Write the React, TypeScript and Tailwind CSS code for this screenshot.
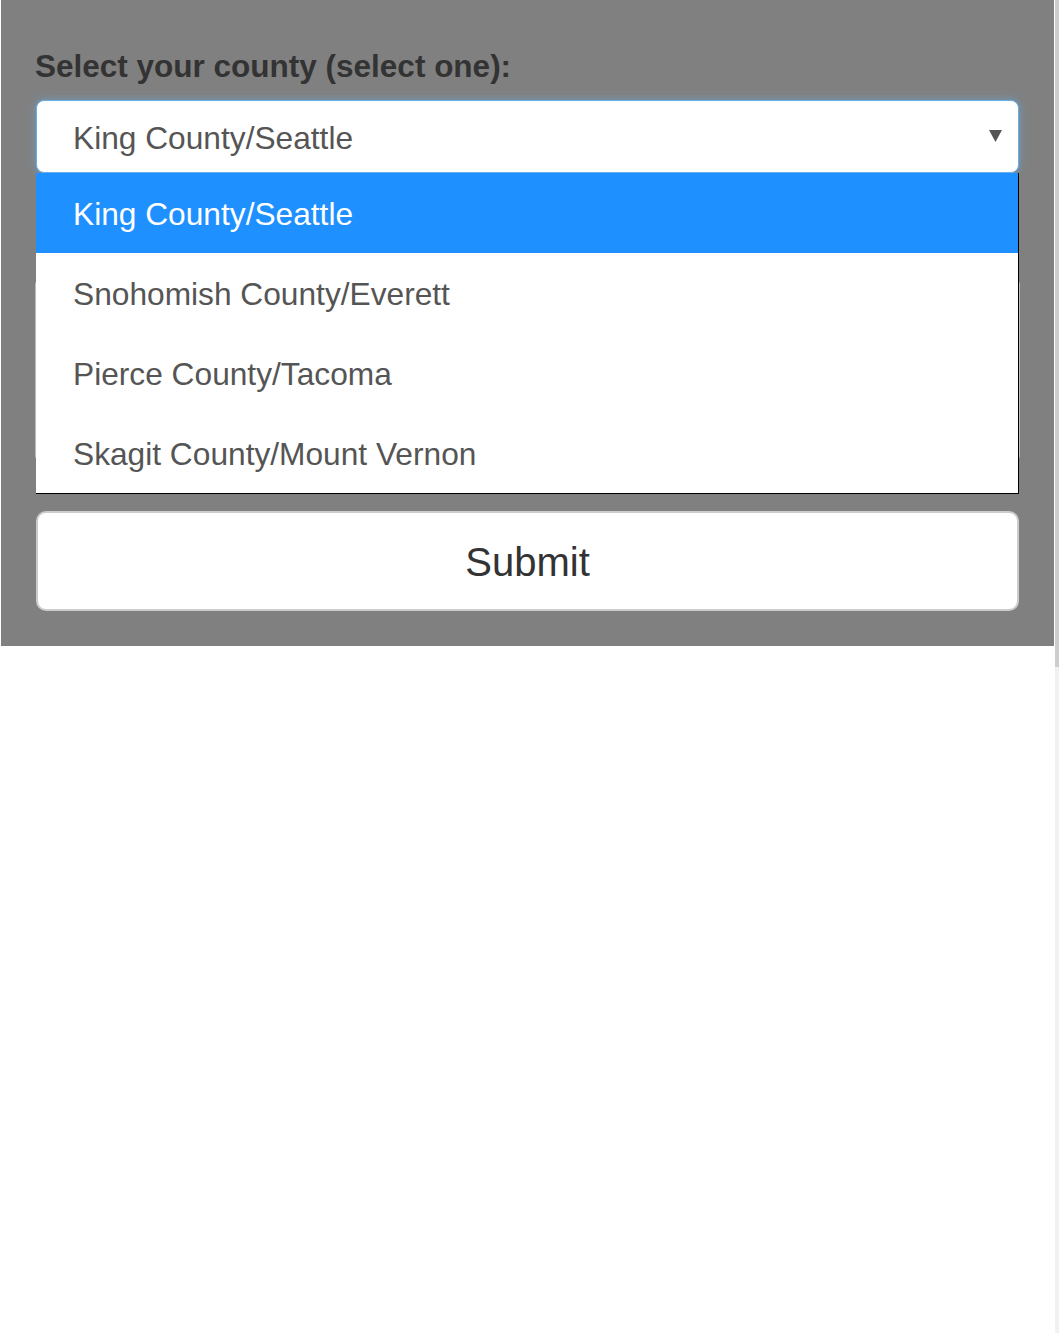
import React from "react";

const options = [
  "King County/Seattle",
  "Snohomish County/Everett",
  "Pierce County/Tacoma",
  "Skagit County/Mount Vernon",
];

export default function App() {
  return (
    <div
      className="flex w-[1059px] h-[1333px] bg-white"
      style={{ fontFamily: '"Liberation Sans", Arial, sans-serif' }}
    >
      <div className="w-px shrink-0 bg-white" />
      <div className="w-[1053px] shrink-0 self-start bg-[#808080] px-[35px] pt-[48px] pb-[35px]">
        <div className="text-[31.5px] leading-[36px] font-bold text-[#333] -ml-px">
          Select your county (select one):
        </div>
        <div className="relative mt-[16px]">
          <div className="flex h-[73px] items-center justify-between rounded-[8px] border border-[#66afe9] bg-white pl-[36px] pr-[16px] shadow-[0_0_8px_rgba(102,175,233,0.6)]">
            <span className="pt-[4px] text-[31.7px] text-[#555]">King County/Seattle</span>
            <svg width="13" height="12" viewBox="0 0 13 12" className="mt-[-1px]">
              <polygon points="0,0 13,0 6.5,12" fill="#555" />
            </svg>
          </div>
          <div className="h-[338px] pt-[107px]">
            <div className="-ml-px h-[180px] w-[985px] rounded-[4px] border border-[#bbb]" />
          </div>
          <div className="absolute left-0 top-[73px] z-10 w-[983px] border-b border-r border-black bg-white">
            {options.map((o, i) => (
              <div
                key={o}
                className={
                  i === 0
                    ? "flex h-[80px] items-center bg-[#1e90ff] pl-[37px] pt-[4px] text-[31.7px] text-white"
                    : "flex h-[80px] items-center bg-white pl-[37px] pt-[4px] text-[31.7px] text-[#555]"
                }
              >
                {o}
              </div>
            ))}
          </div>
          <button className="flex h-[100px] w-full items-center justify-center rounded-[10px] border-2 border-[#cccccc] bg-white pt-[2px] text-[40px] text-[#333]">
            Submit
          </button>
        </div>
      </div>
      <div className="w-px shrink-0 bg-white" />
      <div className="flex w-[4px] shrink-0 flex-col bg-[#f1f1f1]">
        <div className="h-[667px] bg-[#cdcdcd]" />
      </div>
    </div>
  );
}
